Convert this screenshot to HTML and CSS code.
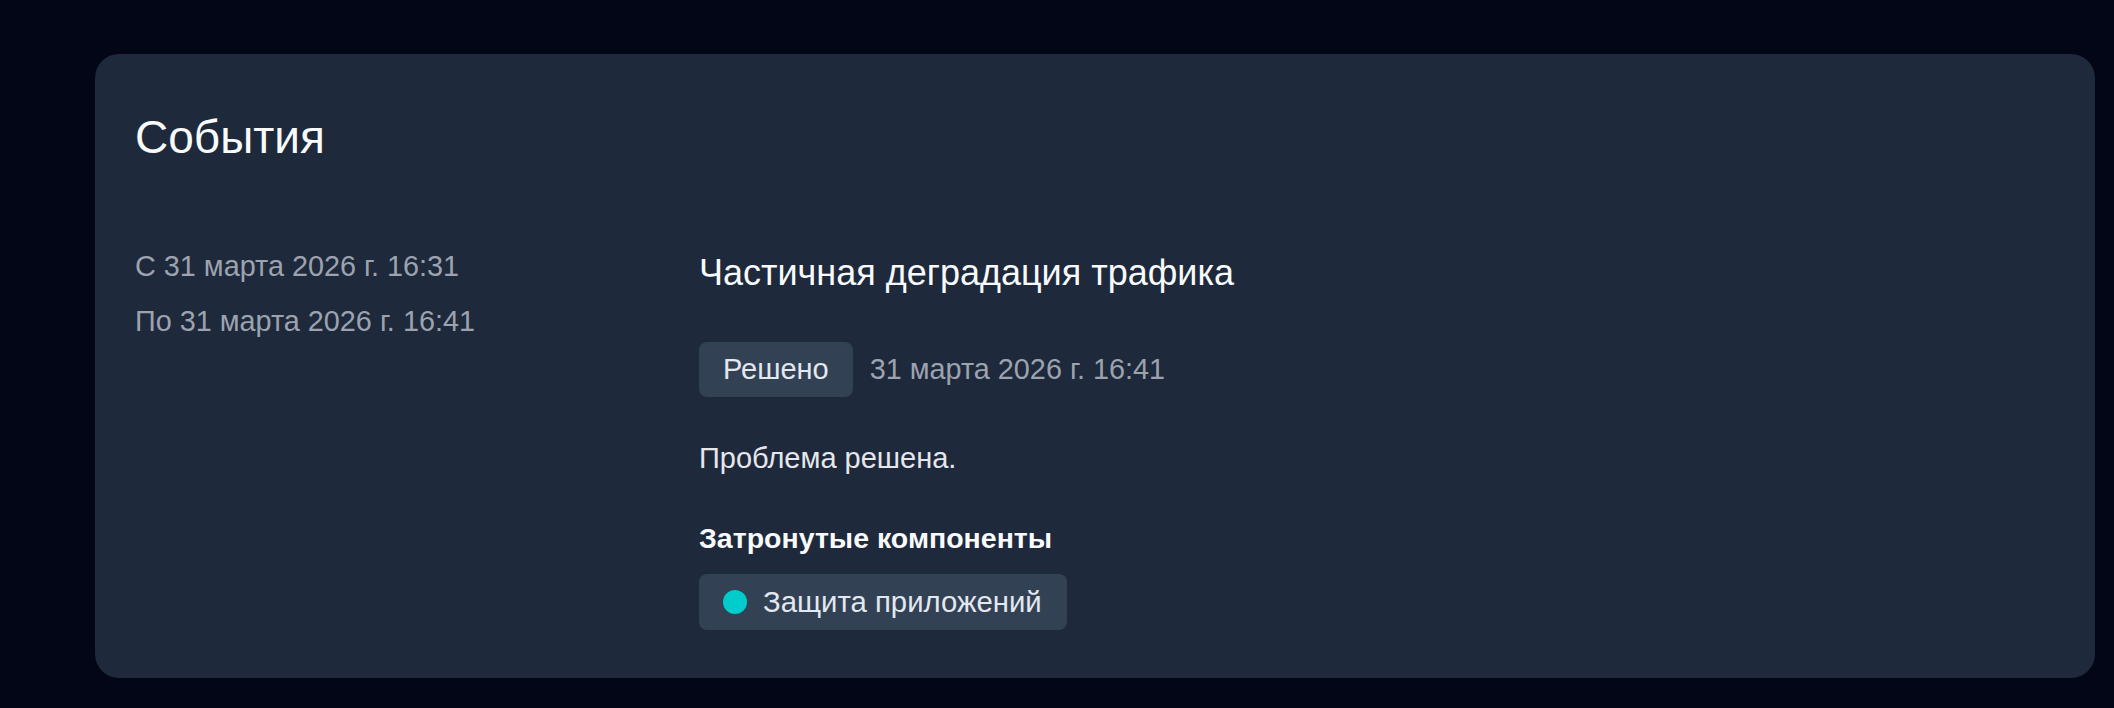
FILE: index.html
```html
<!DOCTYPE html>
<html lang="ru">
<head>
<meta charset="utf-8">
<title>События</title>
<link rel="stylesheet" href="styles.css">
</head>
<body>
<main class="page">
  <section class="card">
    <h1 class="card-title">События</h1>
    <div class="event">
      <div class="event-period">
        <div class="period-line">С 31 марта 2026 г. 16:31</div>
        <div class="period-line">По 31 марта 2026 г. 16:41</div>
      </div>
      <div class="event-body">
        <h2 class="event-title">Частичная деградация трафика</h2>
        <div class="status-row">
          <span class="badge">Решено</span>
          <span class="status-date">31 марта 2026 г. 16:41</span>
        </div>
        <p class="event-text">Проблема решена.</p>
        <h3 class="components-title">Затронутые компоненты</h3>
        <div class="components">
          <span class="chip"><span class="dot"></span>Защита приложений</span>
        </div>
      </div>
    </div>
  </section>
</main>
</body>
</html>
```

FILE: styles.css
```css
* { box-sizing: border-box; }

html, body {
  margin: 0;
  padding: 0;
  background: #020617;
  font-family: "Liberation Sans", Arial, sans-serif;
}

.page {
  padding: 54px 19px 30px 95px;
}

.card {
  width: 2000px;
  background: #1e293b;
  border-radius: 24px;
  padding: 54px 40px 48px 40px;
}

.card-title {
  margin: 0;
  font-size: 46px;
  line-height: 58px;
  font-weight: 400;
  color: #f8fafc;
}

.event {
  display: grid;
  grid-template-columns: 564px 1fr;
  margin-top: 73px;
}

.period-line {
  font-size: 28.8px;
  line-height: 55px;
  color: #9ca3af;
}

.event-title {
  margin: 0;
  font-size: 36px;
  line-height: 68px;
  font-weight: 400;
  color: #f8fafc;
}

.status-row {
  display: flex;
  align-items: center;
  gap: 17px;
  margin-top: 35px;
}

.badge {
  display: inline-block;
  background: #334155;
  color: #e2e8f0;
  font-size: 29px;
  line-height: 55px;
  padding: 0 24px;
  border-radius: 8px;
}

.status-date {
  font-size: 28.8px;
  line-height: 55px;
  color: #9ca3af;
}

.event-text {
  margin: 41px 0 0 0;
  font-size: 29px;
  line-height: 40px;
  color: #e5e7eb;
}

.components-title {
  margin: 40px 0 0 0;
  font-size: 28.5px;
  line-height: 40px;
  font-weight: 700;
  color: #f8fafc;
}

.components {
  display: flex;
  margin-top: 16px;
}

.chip {
  display: inline-flex;
  align-items: center;
  gap: 16px;
  background: #334155;
  color: #e2e8f0;
  font-size: 29.3px;
  line-height: 56px;
  padding: 0 25px 0 24px;
  border-radius: 8px;
}

.dot {
  width: 24px;
  height: 24px;
  border-radius: 50%;
  background: #00cccc;
  flex: none;
}
```
